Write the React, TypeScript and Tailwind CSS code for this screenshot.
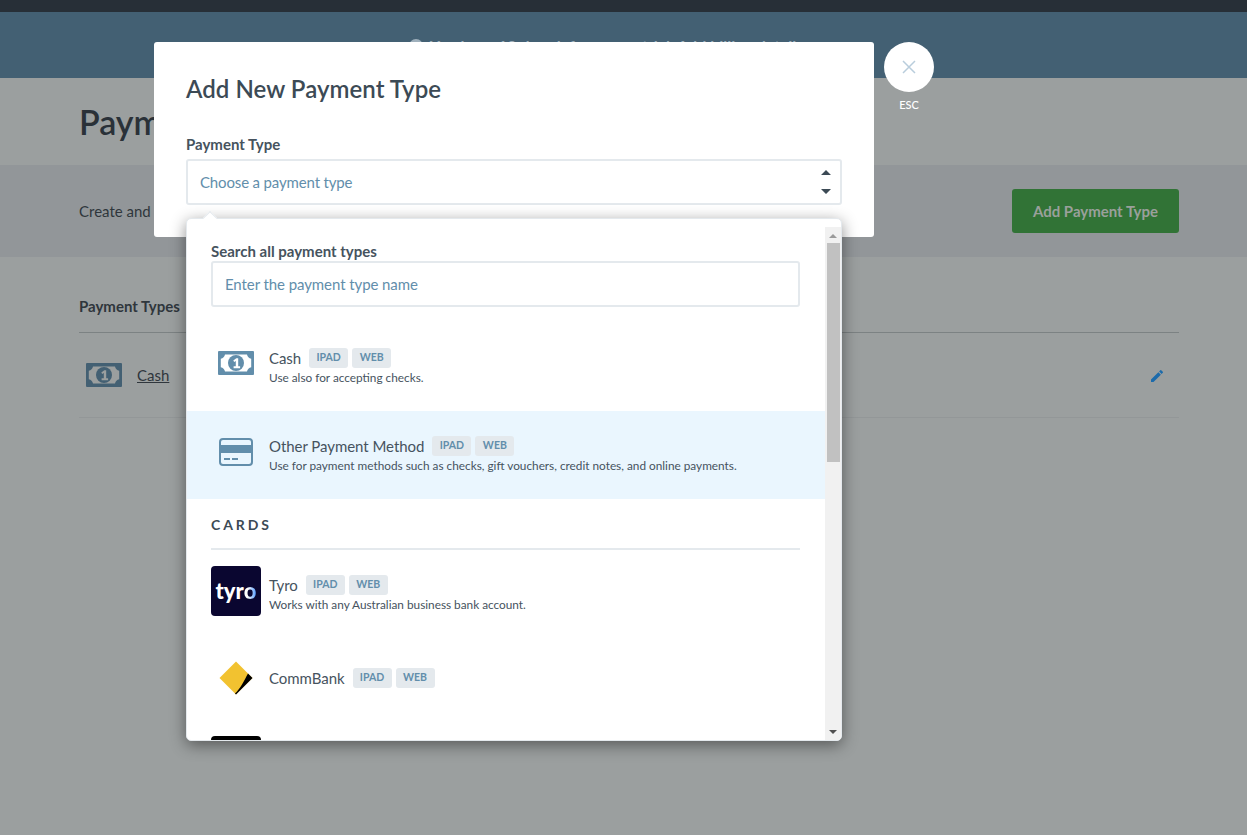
import React from 'react';

const MoneyIcon = ({ color, hole }: { color: string; hole: string }) => (
  <svg viewBox="0 0 36 24" className="h-[24px] w-[36px]">
    <rect x="0" y="0" width="36" height="24" rx="1" fill={color} />
    <path d="M7 3.500h22c.4 2.200 2 3.800 4.200 4.200v8.600c-2.200.4-3.800 2-4.200 4.200H7c-.4-2.200-2-3.800-4.200-4.200V7.700C5 7.300 6.600 5.700 7 3.500z" fill={hole} />
    <circle cx="18" cy="12" r="8" fill={color} />
    <path d="M15.300 9.500l3-2.200h1.900v8h1.900v1.900h-6.500v-1.900h2.200v-5.300l-1.600 1z" fill={hole} />
  </svg>
);

const CardIcon = () => (
  <svg viewBox="0 0 34 28" className="h-[28px] w-[34px]">
    <rect x="1" y="1" width="32" height="26" rx="3" fill="none" stroke="#628eab" strokeWidth="2" />
    <rect x="1" y="7" width="32" height="8" fill="#628eab" />
    <rect x="5" y="20" width="6" height="2" fill="#628eab" />
    <rect x="13" y="20" width="6" height="2" fill="#628eab" />
  </svg>
);

const CommBankIcon = () => (
  <svg viewBox="0 0 34 34" className="h-[34px] w-[34px]">
    <path d="M17 0.500L33.500 17 17 33.500 0.500 17z" fill="#f2c230" />
    <path d="M29 12.500L33.500 17 17 33.500 16 32.500C21 28 25 20 29 12.500z" fill="#000" />
  </svg>
);

const Badge = ({ children }: { children: React.ReactNode }) => (
  <span className="flex h-[20px] w-[39px] items-center justify-center rounded-[3px] bg-[#e4e9ed] text-[10.500px] font-bold text-[#628eab]">
    {children}
  </span>
);

const OptionRow = ({ icon, name, desc, height, iconClass, textClass, active }: { icon: React.ReactNode; name: string; desc?: string; height: string; iconClass?: string; textClass?: string; active?: boolean }) => (
  <div className={`flex items-center pl-[24px] pr-[25px] ${height} ${active ? 'bg-[#eaf6fe]' : ''}`}>
    <div className={`flex w-[50px] shrink-0 items-center justify-center ${iconClass ?? ''}`}>{icon}</div>
    <div className={`ml-[8px] ${textClass ?? ''}`}>
      <div className="flex items-center gap-[4px]">
        <span className="mr-[4px] text-[15px] leading-[20px] tracking-[-0.05px] text-[#46535e]">{name}</span>
        <Badge>IPAD</Badge>
        <Badge>WEB</Badge>
      </div>
      {desc && <div className="mt-[2px] text-[11.800px] leading-[16px] text-[#46535e]">{desc}</div>}
    </div>
  </div>
);

export default function App() {
  return (
    <div className="relative h-[835px] w-[1247px] overflow-hidden bg-[#9b9f9f] font-['Lato',sans-serif] text-[#2a3138]">
      {/* page behind the dialog */}
      <div className="h-[12px] bg-[#272f37]" />
      <div className="flex h-[66px] items-start justify-center gap-[7px] bg-[#436073] pt-[22px] text-[16px] font-bold text-[#9fb0bc]">
        <svg viewBox="0 0 14 14" className="mt-[5px] h-[14px] w-[14px]" fill="#9fb0bc"><circle cx="7" cy="7" r="7" /></svg>
        <span>You have 10 days left on your trial. Add billing details now</span>
      </div>
      <div className="flex h-[87px] items-center px-[79px]">
        <h1 className="text-[34px] font-semibold text-[#2a3138]">Payment Types</h1>
      </div>
      <div className="flex h-[92px] items-center justify-between bg-[#929699] pl-[79px] pr-[68px]">
        <p className="text-[15px] text-[#2f363c]">Create and manage your payment types</p>
        <button className="flex h-[44px] w-[167px] items-center justify-center rounded-[3px] bg-[#317336] text-[15px] font-bold text-[#9aa09b]">
          Add Payment Type
        </button>
      </div>
      <div className="ml-[79px] mr-[68px] mt-[38px]">
        <div className="h-[38px] border-b border-[#7c8283] text-[15px] font-bold leading-[22px] text-[#2f363c]">Payment Types</div>
        <div className="flex h-[85px] items-center border-b border-[#939798] pl-[7px] pr-[14px]">
          <MoneyIcon color="#436073" hole="#9b9f9f" />
          <span className="ml-[15px] text-[15px] text-[#2f363c] underline">Cash</span>
          <svg viewBox="0 0 24 24" className="ml-auto mt-[1px] h-[16px] w-[16px]" fill="#1c6bab">
            <path d="M3 17.250V21h3.750L17.810 9.940l-3.750-3.750L3 17.250zM20.710 7.040a1 1 0 0 0 0-1.410l-2.340-2.340a1 1 0 0 0-1.410 0l-1.830 1.830 3.750 3.750 1.830-1.830z" />
          </svg>
        </div>
      </div>

      {/* dialog */}
      <div className="absolute left-[154px] top-[42px] h-[195px] w-[720px] rounded-[3px] bg-white px-[32px] pt-[30px]">
        <h2 className="text-[24px] font-semibold leading-[34px] tracking-[0.05px] text-[#3c4a55]">Add New Payment Type</h2>
        <div className="mt-[27px] text-[15px] font-bold leading-[22px] text-[#46535e]">Payment Type</div>
        <div className="relative mt-[4px] flex h-[46px] w-[656px] items-center rounded-[3px] border-2 border-[#e4e9ed] pl-[12px] text-[15px] tracking-[-0.15px] text-[#628eab]">
          Choose a payment type
          <svg viewBox="0 0 10 30" className="absolute right-[9px] top-[6px] h-[30px] w-[10px]" fill="#3c4a55">
            <path d="M5 3L10 8H0zM0 22H10L5 27z" />
          </svg>
        </div>
      </div>

      <div className="absolute left-[884px] top-[42px] flex w-[50px] flex-col items-center">
        <div className="flex h-[50px] w-[50px] items-center justify-center rounded-full bg-white">
          <svg viewBox="0 0 14 14" className="h-[14px] w-[14px]" stroke="#b9cddc" strokeWidth="1.500" fill="none">
            <path d="M1 1L13 13M13 1L1 13" />
          </svg>
        </div>
        <span className="mt-[6px] text-[11px] font-medium leading-[14px] text-white">ESC</span>
      </div>

      {/* dropdown panel */}
      <div className="absolute left-[186px] top-[218px] flex h-[523px] w-[656px] overflow-hidden rounded-[5px] border border-[#e4e9ed] bg-white shadow-[0_4px_16px_rgba(0,0,0,0.45)]">
        <div className="h-full w-[638px] shrink-0 overflow-hidden">
          <div className="pl-[24px] pr-[25px] pt-[23px]">
            <div className="text-[15px] font-bold leading-[18px] text-[#46535e]">Search all payment types</div>
            <div className="mt-[1px] flex h-[46px] items-center rounded-[3px] border-2 border-[#e4e9ed] pl-[12px] text-[15px] tracking-[-0.08px] text-[#628eab]">
              Enter the payment type name
            </div>
          </div>
          <OptionRow height="h-[104px] pt-[16px]" iconClass="mb-[8px]" icon={<MoneyIcon color="#628eab" hole="#ffffff" />} name="Cash" desc="Use also for accepting checks." />
          <OptionRow height="h-[88px]" iconClass="mb-[6px]" active icon={<CardIcon />} name="Other Payment Method" desc="Use for payment methods such as checks, gift vouchers, credit notes, and online payments." />
          <div className="ml-[24px] mr-[25px] mt-[17px] h-[34px] border-b-2 border-[#e4e9ed] text-[14px] font-bold leading-[18px] tracking-[2.900px] text-[#3c4a55]">CARDS</div>
          <div className="mt-[16px]">
            <OptionRow height="h-[50px]" textClass="pt-[5px]" icon={
              <div className="flex h-[50px] w-[50px] items-center justify-center rounded-[4px] bg-[#0a0630] text-[22px] font-black leading-none text-white">
                <span>tyr</span><span className="bg-linear-to-r from-white from-30% to-[#3b8cff] bg-clip-text text-transparent">o</span>
              </div>
            } name="Tyro" desc="Works with any Australian business bank account." />
          </div>
          <div className="mt-[37px]">
            <OptionRow height="h-[50px]" icon={<CommBankIcon />} name="CommBank" />
          </div>
          <div className="ml-[24px] mt-[33px] h-[50px] w-[50px] rounded-[4px] bg-black" />
        </div>
        {/* scrollbar */}
        <div className="mt-[8px] flex w-[17px] flex-col items-center bg-[#f1f1f1] pt-[7px]">
          <svg viewBox="0 0 8 4" className="h-[4px] w-[8px]" fill="#9a9a9a"><path d="M4 0L8 4H0z" /></svg>
          <div className="mt-[5px] h-[219px] w-[13px] bg-[#c1c1c1]" />
          <svg viewBox="0 0 8 4" className="mt-auto mb-[6px] h-[4px] w-[8px]" fill="#505050"><path d="M0 0H8L4 4z" /></svg>
        </div>
      </div>
      {/* caret joining the select and the panel */}
      <div className="absolute left-[205px] top-[213px] h-[10px] w-[10px] rotate-45 border-l border-t border-[#e4e9ed] bg-white" />
    </div>
  );
}
